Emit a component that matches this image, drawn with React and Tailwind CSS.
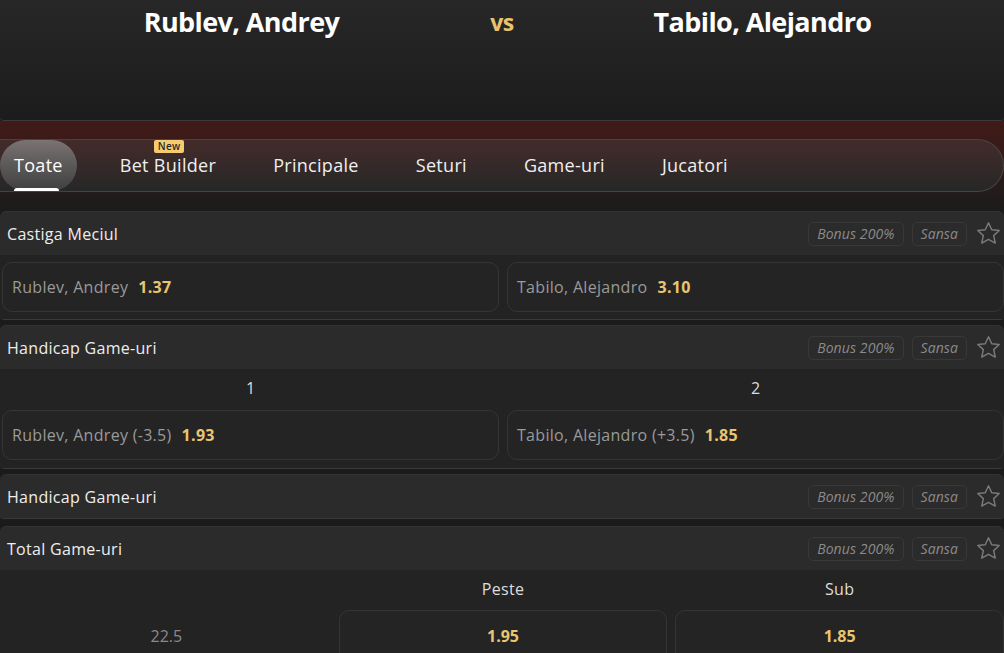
import React from "react";

const font = { fontFamily: '"Open Sans", "Noto Sans", sans-serif' };

function Star() {
  return (
    <svg width="27" height="27" viewBox="0 0 24 24" fill="none" stroke="#7a7a7a" strokeWidth="1.3" strokeLinejoin="round">
      <path d="M12 2.5l2.9 6.2 6.6.7-4.9 4.5 1.4 6.6L12 17.2l-6 3.3 1.4-6.6-4.9-4.5 6.6-.7z" />
    </svg>
  );
}

function MarketHeader({ title }) {
  return (
    <div className="h-[44px] bg-[#2b2b2b] flex items-center justify-between pl-[7px] pr-[2px] rounded-t-[6px] border-t border-[#333333]">
      <span className="text-[16px] text-[#eeeeee] tracking-[0.3px]">{title}</span>
      <div className="flex items-center gap-[8px]">
        <span className="h-[24px] px-[8px] flex items-center border border-[#383838] rounded-[5px] text-[14px] italic text-[#8a8a8a] tracking-[0.1px]">Bonus 200%</span>
        <span className="h-[24px] px-[8px] flex items-center border border-[#383838] rounded-[5px] text-[14px] italic text-[#8a8a8a] tracking-[0.1px]">Sansa</span>
        <Star />
      </div>
    </div>
  );
}

function OddBtn({ name, odd }) {
  return (
    <div className="h-[50px] rounded-[10px] border border-[#353535] bg-[#242424] flex items-center px-[9px] gap-[10px] text-[16px] tracking-[0.3px]">
      <span className="text-[#9a9a9a]">{name}</span>
      <span className="text-[#eac56f] font-bold">{odd}</span>
    </div>
  );
}

const tabs = ["Toate", "Bet Builder", "Principale", "Seturi", "Game-uri", "Jucatori"];

export default function App() {
  return (
    <div className="w-[1004px] h-[653px] overflow-hidden bg-[#1b1b1b]" style={font}>
      {/* Header */}
      <div className="h-[121px] bg-gradient-to-b from-[#272727] to-[#1c1c1c] border-b border-[#3a3a3a] rounded-b-[4px] grid grid-cols-[1fr_38px_1fr] items-start pt-[2px]">
        <div className="text-center text-white font-bold text-[27px] tracking-[-0.6px]">Rublev, Andrey</div>
        <div className="text-center text-[#e8c36f] font-bold text-[23px] pt-[3px] tracking-[-0.5px]">vs</div>
        <div className="text-center text-white font-bold text-[27px] tracking-[-0.6px]">Tabilo, Alejandro</div>
      </div>

      {/* Tabs area */}
      <div className="h-[90px] bg-gradient-to-b from-[#421916] via-[#2e1c1b] to-[#1b1b1b] pt-[18px]">
        <div className="h-[53px] rounded-r-full border-y border-r border-[#4a4242] bg-gradient-to-b from-[#432b2a] to-[#262727] flex items-center gap-[29px]">
          {tabs.map((t, i) => (
            <div
              key={t}
              className={
                i === 0
                  ? "relative h-[51px] px-[14px] rounded-full flex items-center bg-gradient-to-b from-[#7a7472] via-[#5b5858] to-[#404040] text-[18px] text-white tracking-[0.3px]"
                  : "relative h-[51px] px-[14px] flex items-center text-[18px] text-[#efefef] tracking-[0.3px]"
              }
            >
              {t}
              {i === 0 && (
                <span className="absolute left-[14px] right-[18px] bottom-0 h-[3px] rounded-t-full bg-white" />
              )}
              {t === "Bet Builder" && (
                <span className="absolute left-[48px] top-[0px] h-[13px] px-[4px] rounded-[2px] bg-[#f5cd70] text-[#2a2a2a] text-[10px] leading-[13px] font-semibold">New</span>
              )}
            </div>
          ))}
        </div>
      </div>

      {/* Markets */}
      <div className="flex flex-col gap-[5px]">
        <div className="border-b border-[#3a3a3a] rounded-b-[4px]">
          <MarketHeader title="Castiga Meciul" />
          <div className="bg-[#232323] pl-[2px] py-[7px] grid grid-cols-2 gap-[8px]">
            <OddBtn name="Rublev, Andrey" odd="1.37" />
            <OddBtn name="Tabilo, Alejandro" odd="3.10" />
          </div>
        </div>

        <div className="border-b border-[#3a3a3a] rounded-b-[4px]">
          <MarketHeader title="Handicap Game-uri" />
          <div className="bg-[#232323] pl-[2px] pb-[8px] grid grid-cols-2 gap-x-[8px]">
            <div className="h-[41px] flex items-center justify-center pb-[4px] text-[16px] text-[#dddddd]">1</div>
            <div className="h-[41px] flex items-center justify-center pb-[4px] text-[16px] text-[#dddddd]">2</div>
            <OddBtn name="Rublev, Andrey (-3.5)" odd="1.93" />
            <OddBtn name="Tabilo, Alejandro (+3.5)" odd="1.85" />
          </div>
        </div>

        <div className="border-b border-[#3a3a3a] rounded-b-[4px]">
          <MarketHeader title="Handicap Game-uri" />
        </div>

        <div className="mt-[2px]">
          <MarketHeader title="Total Game-uri" />
          <div className="bg-[#232323] pl-[2px] pb-[7px] grid grid-cols-3 gap-x-[8px]">
            <div className="h-[40px]" />
            <div className="h-[40px] flex items-center justify-center pb-[2px] text-[16px] text-[#dddddd] tracking-[0.3px]">Peste</div>
            <div className="h-[40px] flex items-center justify-center pb-[2px] text-[16px] text-[#dddddd] tracking-[0.3px]">Sub</div>
            <div className="h-[52px] flex items-center justify-center text-[16px] text-[#8a8a8a]">22.5</div>
            <div className="h-[52px] rounded-[10px] border border-[#353535] bg-[#242424] flex items-center justify-center text-[16px] font-bold text-[#eac56f]">1.95</div>
            <div className="h-[52px] rounded-[10px] border border-[#353535] bg-[#242424] flex items-center justify-center text-[16px] font-bold text-[#eac56f]">1.85</div>
          </div>
        </div>
      </div>
    </div>
  );
}
